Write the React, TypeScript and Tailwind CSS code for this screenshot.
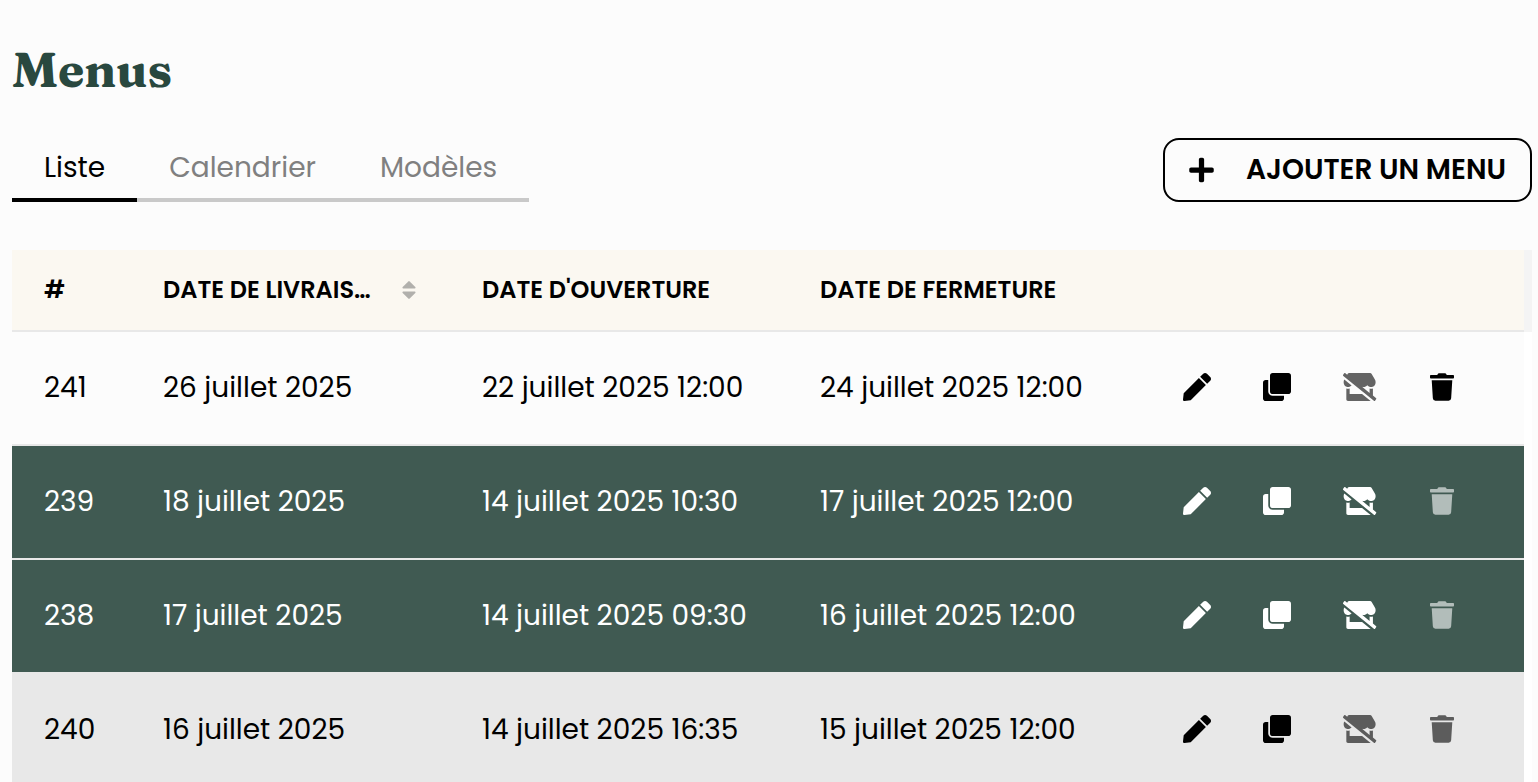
import { useState } from "react";

import { FaClone, FaPen, FaPlus, FaStoreSlash, FaTrash } from "react-icons/fa";

type Menu = {
    id: number
    delivery: string
    opening: string
    closing: string
    row: string
    canClose: boolean
    canDelete: boolean
}

const tabs = ['Liste', 'Calendrier', 'Modèles']

const menus: Menu[] = [
    {
        id: 241,
        delivery: '26 juillet 2025',
        opening: '22 juillet 2025 12:00',
        closing: '24 juillet 2025 12:00',
        row: 'bg-[#fcfcfc] text-black',
        canClose: false,
        canDelete: true
    },
    {
        id: 239,
        delivery: '18 juillet 2025',
        opening: '14 juillet 2025 10:30',
        closing: '17 juillet 2025 12:00',
        row: 'bg-[#405a52] text-white',
        canClose: true,
        canDelete: false
    },
    {
        id: 238,
        delivery: '17 juillet 2025',
        opening: '14 juillet 2025 09:30',
        closing: '16 juillet 2025 12:00',
        row: 'bg-[#405a52] text-white',
        canClose: true,
        canDelete: false
    },
    {
        id: 240,
        delivery: '16 juillet 2025',
        opening: '14 juillet 2025 16:35',
        closing: '15 juillet 2025 12:00',
        row: 'bg-[#e8e8e8] text-black',
        canClose: false,
        canDelete: false
    },
]

function SortIcon() {
    return (
        <svg width="14" height="20" viewBox="0 0 14 20" fill="#b1b0ac" aria-hidden="true">
            <path d="M6.300 1.400a1 1 0 0 1 1.400 0l5.600 5.600c.5.500.2 1.400-.5 1.400H1.200c-.7 0-1-.9-.5-1.400z"/>
            <path d="M6.300 18.600a1 1 0 0 0 1.400 0l5.600-5.600c.5-.5.2-1.400-.5-1.400H1.200c-.7 0-1 .9-.5 1.400z"/>
        </svg>
    )
}

export default function App() {

    const [tab, setTab] = useState('Liste')

    return (
        <div className="flex h-screen flex-col overflow-hidden bg-[#fcfcfc] pl-3 pr-[6px] pt-10 font-['Poppins','Inter',sans-serif] text-black">

            <h1 className="font-['Fraunces','Liberation_Serif',serif] text-5xl font-bold leading-[60px] text-[#29483f]">Menus</h1>

            <div className="mt-[38px] flex shrink-0 items-end justify-between">

                <div role="tablist" className="flex">
                    { tabs.map( name => (
                        <button
                            key={name}
                            role="tab"
                            aria-selected={tab === name}
                            onClick={() => setTab(name)}
                            className={`h-16 border-b-4 px-8 text-[28px] leading-10
                                ${tab === name ? 'border-black text-black' : 'border-[#c9c9c9] text-[#808080]'}`}
                        >
                            {name}
                        </button>
                    ))}
                </div>

                <button className="flex h-16 items-center gap-8 rounded-2xl border-2 border-black px-6 text-[28px] font-semibold">
                    <FaPlus size={28} className="w-[25px]"/>
                    AJOUTER UN MENU
                </button>

            </div>

            <div className="mt-12 flex">

                <table className="min-w-0 flex-1 table-fixed border-separate border-spacing-0 text-left">
                    <colgroup>
                        <col className="w-[119px]"/>
                        <col className="w-[319px]"/>
                        <col className="w-[338px]"/>
                        <col className="w-[363px]"/>
                        <col/>
                    </colgroup>
                    <thead className="bg-[#fbf8f1] text-2xl">
                        <tr className="h-[82px] *:border-b-2 *:border-[#e8e8e8] *:px-8 *:font-semibold">
                            <th>#</th>
                            <th>
                                <button className="flex w-full items-center gap-[31px] whitespace-nowrap" title="Date de livraison">
                                    DATE DE LIVRAIS…
                                    <SortIcon/>
                                </button>
                            </th>
                            <th>DATE D'OUVERTURE</th>
                            <th>DATE DE FERMETURE</th>
                            <th aria-label="Actions"/>
                        </tr>
                    </thead>
                    <tbody className="text-[28px]">
                        { menus.map( menu => (
                            <tr key={menu.id} className={`h-[114px] *:border-b-2 *:border-[#e8e8e8] *:px-8 ${menu.row}`}>
                                <td>{menu.id}</td>
                                <td>{menu.delivery}</td>
                                <td>{menu.opening}</td>
                                <td>{menu.closing}</td>
                                <td>
                                    <div className="flex items-center gap-[52px] pb-0.5">
                                        <button aria-label="Modifier">
                                            <FaPen/>
                                        </button>
                                        <button aria-label="Dupliquer">
                                            <FaClone/>
                                        </button>
                                        <button aria-label="Fermer" disabled={!menu.canClose} className="disabled:opacity-60">
                                            <FaStoreSlash className="w-[35px]"/>
                                        </button>
                                        <button aria-label="Supprimer" disabled={!menu.canDelete} className="disabled:opacity-60">
                                            <FaTrash className="w-6"/>
                                        </button>
                                    </div>
                                </td>
                            </tr>
                        ))}
                    </tbody>
                </table>

                {/* scrollbar gutter */}
                <div className="w-2 bg-white">
                    <div className="h-[82px] bg-[#f4f4f4]"/>
                </div>

            </div>

        </div>
    )
}
